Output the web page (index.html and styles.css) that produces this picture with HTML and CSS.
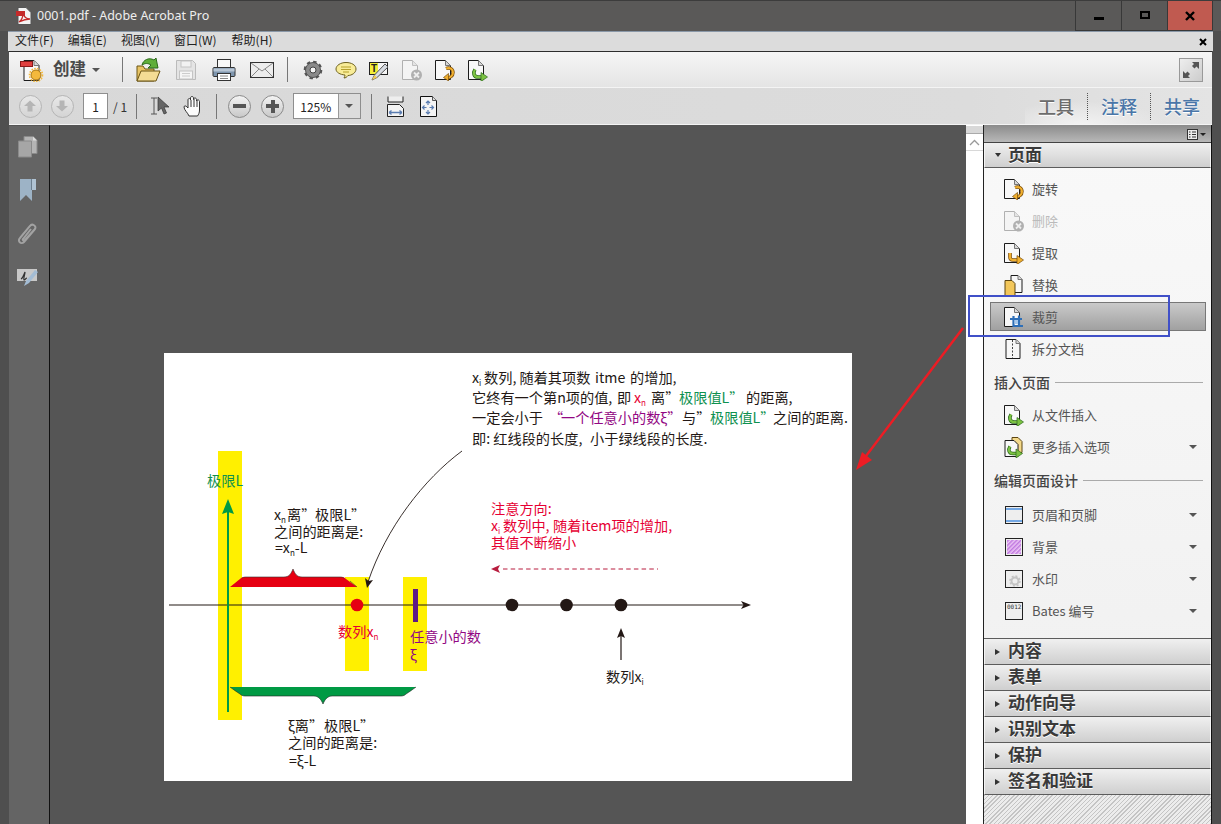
FILE: index.html
```html
<!DOCTYPE html>
<html lang="zh">
<head>
<meta charset="utf-8">
<title>0001.pdf - Adobe Acrobat Pro</title>
<link rel="stylesheet" href="styles.css">
</head>
<body>
<svg class="defs" width="0" height="0">
  <defs>
    <g id="sheet"><path d="M1.500 1.500h10l5 5v14h-15z" fill="#f8f8f8" stroke="#1c1c1c"/><path d="M11.500 1.500v5h5" fill="#d8d8d8" stroke="#777"/></g>
    <g id="sheetg"><path d="M1.500 1.500h10l5 5v14h-15z" fill="#f4f4f4" stroke="#b0b0b0"/><path d="M11.500 1.500v5h5" fill="#e4e4e4" stroke="#c0c0c0"/></g>
    <symbol id="rotate" viewBox="0 0 22 22"><use href="#sheet"/><path d="M12 9.500c4-1.500 7 .5 7 4 0 3.500-3 5.500-6 5" fill="none" stroke="#7a4d0a" stroke-width="3.400"/><path d="M12 9.500c4-1.500 7 .5 7 4 0 3.500-3 5.500-6 5" fill="none" stroke="#f0b030" stroke-width="2"/><path d="M14.500 14.500l-5 4 5 3.500z" fill="#f0b030" stroke="#7a4d0a" stroke-width=".7"/></symbol>
    <symbol id="delete" viewBox="0 0 22 22"><use href="#sheetg"/><circle cx="15.500" cy="16" r="5.500" fill="#b0b0b0"/><path d="M13 13.500l5 5m0-5l-5 5" stroke="#eee" stroke-width="1.800"/></symbol>
    <symbol id="extract" viewBox="0 0 22 22"><use href="#sheet"/><path d="M7 11v4c0 2 1 3 3 3h5" fill="none" stroke="#7a4d0a" stroke-width="3.600"/><path d="M7 11v4c0 2 1 3 3 3h5" fill="none" stroke="#f0b030" stroke-width="2.200"/><path d="M14 13.500l6.500 4.500-6.500 4.500z" fill="#f0b030" stroke="#7a4d0a" stroke-width=".7"/></symbol>
    <symbol id="replace" viewBox="0 0 22 22"><path d="M8 1.500h7l4 4v13H8z" fill="#f8f8f8" stroke="#1c1c1c"/><path d="M15 1.500v4h4" fill="#ddd" stroke="#777"/><path d="M2 6.500h7l3 3v12H2z" fill="#f3c75a" stroke="#5c4510"/></symbol>
    <symbol id="crop" viewBox="0 0 22 22"><use href="#sheet"/><path d="M7 13h12M16 9.500v9.500M10.500 10v10h9.500" fill="none" stroke="#2e6fb8" stroke-width="2.200"/><rect x="11.500" y="14" width="3.500" height="4" fill="#a6c8ec"/></symbol>
    <symbol id="split" viewBox="0 0 22 22"><path d="M3 1.500h10l4 4v15H3z" fill="#f8f8f8" stroke="#1c1c1c"/><path d="M13 1.500v4h4" fill="#d8d8d8" stroke="#777"/><path d="M9.500 2v18" stroke="#444" stroke-dasharray="2 1.500"/></symbol>
    <symbol id="fromfile" viewBox="0 0 22 22"><use href="#sheet"/><path d="M8 10.500c-2 3-1.500 7.500 3 7.500h4" fill="none" stroke="#2c6a1c" stroke-width="3.600"/><path d="M8 10.500c-2 3-1.500 7.500 3 7.500h4" fill="none" stroke="#7cc242" stroke-width="2.200"/><path d="M14 13.500l6.500 4.500-6.500 4.500z" fill="#7cc242" stroke="#2c6a1c" stroke-width=".7"/></symbol>
    <symbol id="more" viewBox="0 0 22 22"><path d="M9 1.500h6l4 4v11H9z" fill="#f4d98a" stroke="#5c4510"/><path d="M2 4.500h9l4 4v12H2z" fill="#f8f8f8" stroke="#1c1c1c"/><path d="M7 10.500c-2 3-1.500 7 3 7h4" fill="none" stroke="#2c6a1c" stroke-width="3.400"/><path d="M7 10.500c-2 3-1.500 7 3 7h4" fill="none" stroke="#7cc242" stroke-width="2"/><path d="M13 13l6.500 4.500L13 22z" fill="#7cc242" stroke="#2c6a1c" stroke-width=".7"/></symbol>
    <symbol id="header" viewBox="0 0 22 22"><rect x="2.500" y="2.500" width="17" height="17" fill="#eee" stroke="#222"/><rect x="3" y="4" width="16" height="2" fill="#74a8e4"/><rect x="3" y="16" width="16" height="2" fill="#74a8e4"/></symbol>
    <pattern id="hatch" width="3" height="3" patternUnits="userSpaceOnUse" patternTransform="rotate(-45)"><rect width="3" height="3" fill="#ecc6f4"/><rect width="3" height="1.500" fill="#c078e0"/></pattern>
    <symbol id="background" viewBox="0 0 22 22"><rect x="2.500" y="2.500" width="17" height="17" fill="#eee" stroke="#222"/><rect x="4" y="4" width="14" height="14" fill="url(#hatch)"/></symbol>
    <symbol id="watermark" viewBox="0 0 22 22"><rect x="2.500" y="2.500" width="17" height="17" fill="#eee" stroke="#222"/><circle cx="12" cy="13" r="3.500" fill="none" stroke="#c4c4c4" stroke-width="2"/><circle cx="12" cy="13" r="5" fill="none" stroke="#c4c4c4" stroke-width="1.500" stroke-dasharray="2 1.900"/></symbol>
    <symbol id="bates" viewBox="0 0 22 22"><rect x="2.500" y="2.500" width="17" height="17" fill="#eee" stroke="#222"/><text class="bates-no" x="4" y="8.500">0012</text></symbol>
    <symbol id="create" viewBox="0 0 24 24"><path d="M4 2.500h10l5 5v15H4z" fill="#f8f8f8" stroke="#1c1c1c"/><path d="M14 2.500v5h5" fill="#d8d8d8" stroke="#777"/><rect x="0.500" y="3.500" width="12" height="5" fill="#e04040" stroke="#8a1a1a"/><circle cx="16" cy="17" r="5" fill="#f4b93c" stroke="#a87410"/><circle cx="16" cy="17" r="6.500" fill="none" stroke="#f4b93c" stroke-width="1.600" stroke-dasharray="1.600 1.200"/></symbol>
    <symbol id="open" viewBox="0 0 26 26"><path d="M2 24V9h6l2 3h9v12z" fill="#e8c465" stroke="#6b5414"/><path d="M2 24l4-10h19l-4 10z" fill="#f4dc94" stroke="#6b5414"/><path d="M7 8c1-5 7-8 12-5l2-2 2 10-10 0 3-3c-3-2-6-2-9 0z" fill="#5fae3a" stroke="#2c6a1c"/></symbol>
    <symbol id="save" viewBox="0 0 24 24"><path d="M2.500 2.500h16l3 3v16h-19z" fill="#e4e4e4" stroke="#bbb"/><rect x="7" y="3" width="10" height="6" fill="#f2f2f2" stroke="#c4c4c4"/><rect x="5.500" y="13" width="13" height="8" fill="#f5f5f5" stroke="#c4c4c4"/><path d="M8 15.500h8M8 18h8" stroke="#ccc"/></symbol>
    <symbol id="print" viewBox="0 0 24 24"><rect x="5.500" y="1.500" width="13" height="9" fill="#f8f8f8" stroke="#333"/><path d="M2 9.500h20c.5 0 1 .5 1 1v7c0 .5-.5 1-1 1H2c-.5 0-1-.5-1-1v-7c0-.5.5-1 1-1z" fill="#7e95ad" stroke="#333"/><rect x="1.500" y="10.500" width="21" height="3" fill="#b7c5d4"/><rect x="5.500" y="15.500" width="13" height="7" fill="#fff" stroke="#333"/><path d="M8 18h8M8 20.500h8" stroke="#888"/></symbol>
    <symbol id="mail" viewBox="0 0 24 18"><rect x="0.500" y="1.500" width="23" height="15" fill="#ededed" stroke="#333"/><path d="M1 2l11 8 11-8M1 16l8-8M23 16l-8-8" fill="none" stroke="#888"/></symbol>
    <symbol id="gear" viewBox="0 0 22 22"><circle cx="11" cy="11" r="7.500" fill="#8a8a8a" stroke="#555" stroke-width="1"/><circle cx="11" cy="11" r="8.300" fill="none" stroke="#555" stroke-width="2" stroke-dasharray="3.500 3"/><circle cx="11" cy="11" r="3" fill="#f4f4f4" stroke="#444"/></symbol>
    <symbol id="comment" viewBox="0 0 22 22"><path d="M11 3.500c5.500 0 10 2.500 10 6.500s-4.500 6.500-8 6.500c-1 1.500-2.500 2.500-4 2.500 .5-1 1-2 1-3C5 15.500 1 13.500 1 10s4.500-6.500 10-6.500z" fill="#f8ec98" stroke="#6d6120"/><path d="M6 8h10M6 10.500h10M8 13h6" stroke="#b5a02c"/></symbol>
    <symbol id="note" viewBox="0 0 22 22"><rect x="1.500" y="3.500" width="18" height="12" fill="#f4f4f4" stroke="#222"/><rect x="2" y="4" width="8" height="11" fill="#f3ed3a"/><text class="note-t" x="3" y="13">T</text><path d="M4 21l2.500-5L17 5l3 3L9 18.500z" fill="#d8dce2" stroke="#555"/><path d="M4 21l2.500-5 2.500 2.500z" fill="#f1cb52"/></symbol>
    <symbol id="fitw" viewBox="0 0 17 21"><path d="M1 .5v5.500h15V.5" fill="#eee" stroke="#222"/><path d="M.5 8.500h12l4 4v8H.5z" fill="#f4f4f4" stroke="#222"/><path d="M2 16.500h13M2 16.500l2.500-2m-2.500 2l2.500 2M15 16.500l-2.500-2M15 16.500l-2.500 2" fill="none" stroke="#5a7cb0" stroke-width="1.300"/></symbol>
    <symbol id="fitp" viewBox="0 0 17 21"><path d="M.5 .5h12l4 4v16H.5z" fill="#f4f4f4" stroke="#111"/><path d="M12.500 .5v4h4" fill="#ddd" stroke="#555"/><path d="M8 5v4M6 7l2-2 2 2M8 18v-4M6 16l2 2 2-2M2.500 11.500h4M4.500 9.500l-2 2 2 2M13.500 11.500h-4M11.500 9.500l2 2-2 2" fill="none" stroke="#5a7cb0" stroke-width="1.200"/></symbol>
  </defs>
</svg>

<div class="window">
  <header class="titlebar">
    <svg class="app-icon" viewBox="0 0 16 18"><path d="M2 .5h8l5 5v12H2z" fill="#f4f4f4" stroke="#555"/><rect x="0" y="4" width="9" height="5" fill="#c42b2b"/><path d="M3 15c3-2 4-6 4-9 1 4 3 6 7 6-3 0-7 1-11 3z" fill="none" stroke="#c42b2b" stroke-width="1.300"/></svg>
    <span class="title">0001.pdf - Adobe Acrobat Pro</span>
    <div class="win-btns">
      <div class="win-btn"><span class="g-min"></span></div>
      <div class="win-btn"><span class="g-max"></span></div>
      <div class="win-btn win-close"><svg width="10" height="10" viewBox="0 0 10 10"><path d="M1 1l8 8M9 1l-8 8" stroke="#000" stroke-width="2.400"/></svg></div>
    </div>
  </header>

  <nav class="menubar">
    <span>文件(F)</span><span>编辑(E)</span><span>视图(V)</span><span>窗口(W)</span><span>帮助(H)</span>
    <svg class="menu-close" width="8" height="8" viewBox="0 0 8 8"><path d="M1 1l6 6M7 1L1 7" stroke="#000" stroke-width="2"/></svg>
  </nav>

  <div class="toolbar tb-main">
    <div class="create">
      <svg class="i24"><use href="#create"/></svg>
      <span class="create-label">创建</span>
      <span class="caret"></span>
    </div>
    <span class="sep sep-a"></span>
    <div class="group g38">
      <span class="btn"><svg class="i26"><use href="#open"/></svg></span>
      <span class="btn"><svg class="i24"><use href="#save"/></svg></span>
      <span class="btn"><svg class="i24"><use href="#print"/></svg></span>
      <span class="btn"><svg class="i-mail"><use href="#mail"/></svg></span>
    </div>
    <span class="sep sep-b"></span>
    <div class="group g33 g-tools">
      <span class="btn"><svg class="i22"><use href="#gear"/></svg></span>
      <span class="btn"><svg class="i22"><use href="#comment"/></svg></span>
      <span class="btn"><svg class="i22"><use href="#note"/></svg></span>
      <span class="btn"><svg class="i22"><use href="#delete"/></svg></span>
      <span class="btn"><svg class="i22"><use href="#rotate"/></svg></span>
      <span class="btn"><svg class="i22"><use href="#fromfile"/></svg></span>
    </div>
    <div class="expand">
      <svg width="20" height="20" viewBox="0 0 20 20"><path d="M11 2h7v7l-2.500-2.500-2 2-2.500-2.500 2-2zM9 18H2v-7l2.500 2.500 2-2 2.500 2.500-2 2z" fill="#555"/></svg>
    </div>
  </div>

  <div class="toolbar tb-nav">
    <div class="group g32">
      <span class="btn"><span class="round off"><svg width="12" height="12" viewBox="0 0 12 12"><path d="M6 .5L12 6H8.500v5.500h-5V6H0z" fill="#b5b5b5"/></svg></span></span>
      <span class="btn"><span class="round off"><svg width="12" height="12" viewBox="0 0 12 12"><path d="M6 11.500L12 6H8.500V.5h-5V6H0z" fill="#b5b5b5"/></svg></span></span>
    </div>
    <span class="field pageno">1</span>
    <span class="pagecount">/ 1</span>
    <span class="sep sep-c"></span>
    <div class="group g32 g-hand">
      <span class="btn"><svg width="20" height="20" viewBox="0 0 20 20"><path d="M0 2h6M0 18h6M3 2v16" stroke="#555" fill="none"/><path d="M7 1v14l3.500-3 2.500 6 2.500-1-2.500-6h5z" fill="#666" stroke="#333" stroke-width=".7"/></svg></span>
      <span class="btn"><svg width="21" height="23" viewBox="0 0 21 23"><path d="M6 21c-1-3-5-6-5-9 0-1.500 2-1.500 3 0l1 1V5c0-2 2.500-2 2.500 0V3c0-2 3-2 3 0v1.500c0-2 3-2 3 0V6c0-1.500 3-1.500 3 .5V15c0 3-1 4.500-2 6z" fill="#fbfbfb" stroke="#333"/><path d="M8 5v7M11 4v8M14 5v7" stroke="#333" fill="none"/></svg></span>
    </div>
    <span class="sep sep-d"></span>
    <div class="group g33 g-zoom">
      <span class="btn"><span class="round"><span class="bar"></span></span></span>
      <span class="btn"><span class="round"><span class="bar"></span><span class="bar bar-v"></span></span></span>
    </div>
    <div class="field zoombox"><span class="zoomval">125%</span><span class="zoomdrop"><span class="caret"></span></span></div>
    <span class="sep sep-e"></span>
    <div class="group g33 g-fit">
      <span class="btn"><svg width="17" height="21"><use href="#fitw"/></svg></span>
      <span class="btn"><svg width="17" height="21"><use href="#fitp"/></svg></span>
    </div>
    <div class="tabs">
      <span class="tab tab-tools">工具</span>
      <span class="tab tab-blue">注释</span>
      <span class="tab tab-blue">共享</span>
    </div>
  </div>

  <main class="main">
    <aside class="nav-rail">
      <svg width="20" height="22" viewBox="0 0 20 22"><path d="M6 .5h9l4 4v13H6z" fill="#b4b4b4" stroke="#8a8a8a"/><path d="M15 .5v4h4" fill="#dcdcdc"/><path d="M.5 5h13v16H.5z" fill="#a6a6a6" stroke="#8a8a8a"/></svg>
      <svg width="18" height="24" viewBox="0 0 18 24"><path d="M1 1h12v22l-6-6-6 6z" fill="#9db3c6"/><path d="M12 1h5v11h-5z" fill="#b0c3d3"/><path d="M12 1h1v11h-1z" fill="#6d7f8f"/></svg>
      <svg width="21" height="25" viewBox="0 0 21 25"><path d="M18 7L7 20c-3 3-7-1-4-4L13 4c2-3 7 0 5 3L8 18c-1 1-3 0-2-1l8-10" fill="none" stroke="#a2a2a2" stroke-width="2"/></svg>
      <svg width="24" height="20" viewBox="0 0 24 20"><rect x="1" y="2" width="20" height="12" fill="#c8c8c8"/><path d="M5 12c2-1 3-5 4-7 0 3-2 7-1 8 1 0 2-2 3-2" fill="none" stroke="#333" stroke-width="1.200"/><path d="M8 19l2-5 9-11 3 2-9 11z" fill="#a3bcd4"/></svg>
    </aside>

    <section class="doc">
      <div class="page">
        <svg class="sheet-art" viewBox="164 353 688 428" width="688" height="428">
          <rect x="218" y="451" width="24" height="269" fill="#fff000"/>
          <rect x="345" y="577" width="24" height="94" fill="#fff000"/>
          <rect x="403" y="577" width="24" height="94" fill="#fff000"/>

          <path d="M169 605H745" stroke="#231815" stroke-width="1.200"/>
          <path d="M751 605l-10-4 2.500 4-2.500 4z" fill="#231815"/>

          <path d="M228 712V510" stroke="#009a44" stroke-width="2"/>
          <path d="M228 499l6 15-6-2-6 2z" fill="#009a44"/>

          <path d="M230 587c4-3 7-6 10-8 2-2 3-2 6-2h38c5 0 7-3 9-8 2 5 4 8 9 8h38c3 0 4 0 6 2 3 2 7 5 11 8z" fill="#e60012"/>
          <path d="M242 578c2-1 3-1 4-1h38c5 0 7-3 9-8 2 5 4 8 9 8h38c1 0 2 0 4 1 M350 581l7 6" fill="none" stroke="#333" stroke-width=".6"/>
          <path d="M230 687H416c-4 3-7 5-10 7-2 2-4 2-6 2h-68c-4 0-7 3-9 8-2-5-5-8-9-8h-68c-2 0-4 0-6-2-3-2-6-4-10-7z" fill="#009a44"/>
          <path d="M230 687c4 3 7 5 10 7 2 2 4 2 6 2h68c4 0 7 3 9 8 2-5 5-8 9-8h68c2 0 4 0 6-2 3-2 6-4 10-7" fill="none" stroke="#222" stroke-width=".6"/>

          <circle cx="357" cy="605" r="6.300" fill="#e60012"/>
          <rect x="413" y="589" width="5" height="33" fill="#5f1985"/>
          <circle cx="512" cy="605" r="6.300" fill="#231815"/>
          <circle cx="566.500" cy="605" r="6.300" fill="#231815"/>
          <circle cx="621" cy="605" r="6.300" fill="#231815"/>

          <path d="M621 660V634" stroke="#231815" stroke-width="1.200"/>
          <path d="M621 628l4 10-4-2-4 2z" fill="#231815"/>

          <path d="M462 451C424 479 386 528 368 582" fill="none" stroke="#231815" stroke-width=".9"/>
          <path d="M367 588l-2-10 3.500 3 4.500-1z" fill="#231815"/>

          <path d="M503 569H658" stroke="#b81c3e" stroke-dasharray="4.500 3.200"/>
          <path d="M491 569l9-4-2 4 2 4z" fill="#b81c3e"/>

          <text class="tx" x="472" y="383">x<tspan class="sub" dy="3">i</tspan><tspan x="484" dy="-3">数列, 随着其项数</tspan><tspan x="595">itme</tspan><tspan x="630">的增加,</tspan></text>
          <text class="tx" x="472" y="403">它终有一个第n项的值,<tspan x="617">即</tspan><tspan class="red" x="634">x</tspan><tspan class="sub red" dy="3">n</tspan><tspan x="651" dy="-3">离”</tspan><tspan class="green" x="679">极限值L”</tspan><tspan x="746">的距离,</tspan></text>
          <text class="tx" x="472" y="423">一定会小于<tspan class="purple" x="549">“</tspan><tspan class="purple" x="561">一个任意小的数ξ”</tspan><tspan x="682">与”</tspan><tspan class="green" x="710">极限值L”</tspan><tspan x="773">之间的距离.</tspan></text>
          <text class="tx" x="472" y="444">即: 红线段的长度,<tspan x="590">小于绿线段的长度.</tspan></text>

          <text class="tx red" x="491" y="514">注意方向:</text>
          <text class="tx red" x="491" y="531">x<tspan class="sub" dy="3">i</tspan><tspan x="503" dy="-3">数列中,</tspan><tspan x="553">随着item项的增加,</tspan></text>
          <text class="tx red" x="491" y="548">其值不断缩小</text>

          <text class="tx green" x="207" y="486">极限L</text>

          <text class="tx" x="274" y="520">x<tspan class="sub" dy="3">n</tspan><tspan x="287" dy="-3">离”</tspan><tspan x="315">极限L”</tspan></text>
          <text class="tx" x="274" y="537">之间的距离是:</text>
          <text class="tx" x="275" y="553">=x<tspan class="sub" dy="3">n</tspan><tspan dy="-3">-L</tspan></text>

          <text class="tx red" x="338" y="637">数列x<tspan class="sub" dy="3">n</tspan></text>
          <text class="tx purple" x="410" y="642">任意小的数</text>
          <text class="tx purple" x="410" y="660">ξ</text>

          <text class="tx" x="288" y="731">ξ离”<tspan x="324">极限L”</tspan></text>
          <text class="tx" x="288" y="748">之间的距离是:</text>
          <text class="tx" x="289" y="766">=ξ-L</text>

          <text class="tx" x="606" y="682">数列x<tspan class="sub" dy="3">i</tspan></text>
        </svg>
      </div>
    </section>

    <div class="vscroll">
      <span class="vs-cap"></span>
      <span class="vs-up"><svg width="11" height="7" viewBox="0 0 11 7"><path d="M1 6l4.500-4.500L10 6" fill="none" stroke="#999" stroke-width="1.300"/></svg></span>
    </div>

    <aside class="panel">
      <div class="panel-top">
        <svg width="11" height="11" viewBox="0 0 11 11"><rect x=".5" y=".5" width="10" height="10" fill="#eee" stroke="#333"/><path d="M2 3h1.500M5 3h4M2 5.500h1.500M5 5.500h4M2 8h1.500M5 8h4" stroke="#333"/></svg>
        <span class="caret caret-sm"></span>
      </div>
      <div class="acc acc-open"><span class="tri-down"></span><span class="acc-t">页面</span></div>
      <div class="acc-body">
        <div class="item"><svg class="i22"><use href="#rotate"/></svg><span>旋转</span></div>
        <div class="item item-off"><svg class="i22"><use href="#delete"/></svg><span>删除</span></div>
        <div class="item"><svg class="i22"><use href="#extract"/></svg><span>提取</span></div>
        <div class="item"><svg class="i22"><use href="#replace"/></svg><span>替换</span></div>
        <div class="item item-on"><svg class="i22"><use href="#crop"/></svg><span>裁剪</span></div>
        <div class="item"><svg class="i22"><use href="#split"/></svg><span>拆分文档</span></div>
        <div class="subhead"><span>插入页面</span></div>
        <div class="item"><svg class="i22"><use href="#fromfile"/></svg><span>从文件插入</span></div>
        <div class="item"><svg class="i22"><use href="#more"/></svg><span>更多插入选项</span><i class="caret"></i></div>
        <div class="subhead subhead-last"><span>编辑页面设计</span></div>
        <div class="item"><svg class="i22"><use href="#header"/></svg><span>页眉和页脚</span><i class="caret"></i></div>
        <div class="item"><svg class="i22"><use href="#background"/></svg><span>背景</span><i class="caret"></i></div>
        <div class="item"><svg class="i22"><use href="#watermark"/></svg><span>水印</span><i class="caret"></i></div>
        <div class="item"><svg class="i22"><use href="#bates"/></svg><span>Bates 编号</span><i class="caret"></i></div>
      </div>
      <div class="acc"><span class="tri-right"></span><span class="acc-t">内容</span></div>
      <div class="acc"><span class="tri-right"></span><span class="acc-t">表单</span></div>
      <div class="acc"><span class="tri-right"></span><span class="acc-t">动作向导</span></div>
      <div class="acc"><span class="tri-right"></span><span class="acc-t">识别文本</span></div>
      <div class="acc"><span class="tri-right"></span><span class="acc-t">保护</span></div>
      <div class="acc"><span class="tri-right"></span><span class="acc-t">签名和验证</span></div>
      <div class="hatch"></div>
    </aside>

    <div class="callout-box"></div>
    <svg class="callout-arrow" width="125" height="160" viewBox="0 0 125 160"><path d="M109 7L12 135" stroke="#ed1c24" stroke-width="2.400"/><path d="M2 149l16-10-10-8z" fill="#ed1c24"/></svg>
  </main>
</div>
</body>
</html>
```
FILE: styles.css
```css
* { box-sizing: border-box; }
html, body { margin: 0; padding: 0; }
body {
  width: 1221px;
  height: 824px;
  overflow: hidden;
  background: #4f4f4f;
  font-family: "Noto Sans CJK SC", "Noto Sans", sans-serif;
  color: #333;
}
.defs { position: absolute; }
.window {
  width: 1221px;
  height: 824px;
  display: flex;
  flex-direction: column;
  padding: 0 8px;
  background: #4f4f4f;
  border-top: 1px solid #3c3c3c;
}

/* title bar */
.titlebar {
  height: 30px;
  flex: none;
  display: flex;
  align-items: center;
  margin: 0 -8px;
  padding-left: 16px;
  background: #5a5958;
  color: #eee;
}
.app-icon { width: 16px; height: 18px; margin-right: 5px; margin-top: -1px; }
.title { font-family: "Noto Sans", sans-serif; font-size: 12.500px; margin-top: -2px; }
.win-btns { margin-left: auto; margin-right: 8px; display: flex; height: 30px; }
.win-btn {
  width: 46px;
  display: flex;
  align-items: center;
  justify-content: center;
  border-left: 1px solid #383838;
  border-bottom: 1px solid #383838;
  background: #5a5958;
}
.win-close { background: #c05a50; width: 46px; border-right: 1px solid #383838; }
.g-min { width: 10px; height: 3px; background: #000; margin-top: 5px; }
.g-max { width: 10px; height: 8px; border: 2px solid #000; border-top-width: 2px; margin-top: -1px; }

/* menu */
.menubar {
  height: 20px;
  flex: none;
  display: flex;
  align-items: center;
  gap: 14px;
  padding-left: 7px;
  padding-right: 6px;
  padding-bottom: 4px;
  background: #dcdcdc;
  border-top: 1px solid #8a98a8;
  font-size: 12px;
  line-height: 1;
  color: #222;
}
.menubar span:nth-child(n+4) { margin-right: 1px; }
.menu-close { margin-left: auto; margin-top: 4px; }

/* toolbars */
.toolbar {
  flex: none;
  display: flex;
  align-items: center;
  margin-left: 1px;
  margin-right: 1px;
}
.tb-main { background: linear-gradient(#f6f6f6, #e4e4e4); padding-left: 11px; border-top: 1px solid #2e2e2e; border-bottom: 1px solid #f4f4f4; height: 37px; }
.tb-nav { background: linear-gradient(90deg, #d8d8d8, #dcdcdc 80%, #e4e4e4); padding-left: 5px; border-bottom: 1px solid #f4f4f4; height: 37px; }
.group { display: flex; align-items: center; height: 100%; }
.btn { display: flex; align-items: center; justify-content: center; height: 100%; }
.g38 .btn { width: 38px; }
.g33 .btn { width: 33px; }
.g32 .btn { width: 32px; }
.i22 { width: 22px; height: 22px; flex: none; }
.i24 { width: 24px; height: 24px; flex: none; }
.i26 { width: 26px; height: 26px; flex: none; }
.i-mail { width: 24px; height: 18px; }

.create { display: flex; align-items: center; }
.create-label { font-size: 16.500px; font-weight: 700; line-height: 1; color: #4a4a4a; margin-left: 9px; margin-right: 6px; padding-bottom: 2px; }
.caret { display: inline-block; width: 0; height: 0; border-style: solid; border-width: 4px 4.500px 0; border-color: #555 transparent transparent; }
.sep { width: 1px; height: 25px; background: #777; flex: none; }
.sep-a { margin: 0 6px 0 22px; }
.sep-b { margin: 0 8px 0 6px; }
.sep-c { margin: 0 8px 0 9px; }
.sep-d { margin: 0 6px 0 7px; }
.sep-e { margin: 0 7px 0 10px; }

.expand {
  margin-left: auto;
  margin-right: 9px;
  width: 24px;
  height: 24px;
  display: flex;
  align-items: center;
  justify-content: center;
  border: 1px solid #999;
  background: linear-gradient(135deg, #eee, #ccc);
}
.field { background: #fff; border: 1px solid #fff; outline: 1px solid #8e8e8e; outline-offset: -1px; height: 26px; }
.pageno { width: 25px; margin-left: 5px; display: flex; align-items: center; justify-content: center; font-size: 12px; color: #222; }
.pagecount { margin-left: 5px; font-size: 12px; color: #333; width: 14px; white-space: nowrap; }
.round {
  width: 23px;
  height: 23px;
  border-radius: 50%;
  border: 1px solid #8a8a8a;
  background: linear-gradient(#f4f4f4, #c8c8c8);
  display: flex;
  align-items: center;
  justify-content: center;
  position: relative;
}
.round.off { border-color: #b5b5b5; background: linear-gradient(#e8e8e8, #d4d4d4); }
.bar { position: absolute; width: 13px; height: 4px; background: #555; left: 4px; top: 8.500px; }
.bar-v { width: 4px; height: 13px; left: 8.500px; top: 4px; }
.zoombox { margin-left: 4px; width: 68px; display: flex; align-items: center; }
.zoomval { width: 45px; text-align: center; font-size: 12px; color: #222; }
.zoomdrop {
  width: 23px;
  height: 24px;
  background: #dcdcdc;
  border-left: 1px solid #999;
  display: flex;
  align-items: center;
  justify-content: center;
}
.tabs { margin-left: auto; display: flex; align-items: center; padding-right: 12px; height: 100%; background: radial-gradient(ellipse at 30% 100%, #f2f2f2, transparent 45%); }
.tab { font-size: 18px; line-height: 27px; padding: 0 13px; font-weight: 500; text-shadow: 0 1px 0 #fff; }
.tab + .tab { border-left: 1px dotted #555; }
.tab-tools { color: #6c6c6c; }
.tab-blue { color: #4a76a8; }
.tab:last-child { padding-right: 0; }

/* main */
.main { flex: 1; display: flex; min-height: 0; position: relative; margin-left: 1px; margin-right: 1px; background: #555; }
.nav-rail {
  width: 41px;
  flex: none;
  background: #646464;
  border-right: 1px solid #111;
  display: flex;
  flex-direction: column;
  align-items: center;
  padding: 10px 3px 0 0;
  gap: 20px;
  border-top: 1px solid #555;
}
.doc { flex: 1; background: #555; padding: 228px 0 0 114px; min-width: 0; }
.page { width: 688px; height: 428px; background: #fff; }
.sheet-art { display: block; }
.tx { font-family: "Noto Sans CJK SC", sans-serif; font-size: 14.200px; fill: #231815; font-weight: 400; white-space: pre; }
.sub { font-size: 8px; }
.red { fill: #e60033; }
.green { fill: #0f9150; }
.purple { fill: #920783; }
.bates-no { font-family: "DejaVu Sans Mono", monospace; font-size: 6px; fill: #333; }
.note-t { font-family: "Liberation Sans", sans-serif; font-size: 10px; font-weight: 700; fill: #222; }

.vscroll { width: 18px; flex: none; background: #fff; border-right: 1px solid #222; display: flex; flex-direction: column; }
.vs-cap { height: 8px; background: #d8d8d8; border-bottom: 1px solid #aaa; margin-top: 1px; }
.vs-up { height: 17px; display: flex; align-items: center; justify-content: center; border-bottom: 1px solid #d8d8d8; }

.panel { width: 228px; flex: none; display: flex; flex-direction: column; background: linear-gradient(#f9f9f9, #efefef); border-right: 1px solid #111; }
.panel-top {
  height: 18px;
  flex: none;
  display: flex;
  align-items: center;
  justify-content: flex-end;
  gap: 2px;
  padding-right: 5px;
  padding-top: 2px;
  background: linear-gradient(#8b8b8b, #b8b8b8);
  border-bottom: 1px solid #444;
}
.caret-sm { border-width: 3px 3.500px 0; border-color: #222 transparent transparent; }
.acc {
  height: 26px;
  flex: none;
  display: flex;
  align-items: center;
  padding-left: 8px;
  font-size: 17px;
  font-weight: 700;
  line-height: 1;
  color: #3a3a3a;
  text-shadow: 0 1px 0 #fff;
  background: linear-gradient(#f0f0f0, #cfcfcf);
  border-bottom: 1px solid #5c5c5c;
  border-left: 1px solid #f4f4f4;
  border-right: 1px solid #f4f4f4;
}
.acc-t { margin-top: -4px; }
.acc-open { height: 25px; }
.acc-open .acc-t { margin-top: -3px; }
.tri-down { width: 0; height: 0; border-style: solid; border-width: 4px 3.500px 0; border-color: #333 transparent transparent; margin: 0 7px 0 2px; }
.tri-right { width: 0; height: 0; border-style: solid; border-width: 3.500px 0 3.500px 5px; border-color: transparent transparent transparent #333; margin: 0 8px 0 2px; }
.acc-body { height: 471px; flex: none; padding: 6px 5px 0 6px; border-bottom: 1px solid #5c5c5c; }
.item {
  height: 29px;
  margin-bottom: 3px;
  display: flex;
  align-items: center;
  padding-left: 12px;
  padding-right: 8px;
  font-size: 13px;
  line-height: 1;
  color: #555;
  border: 1px solid transparent;
}
.item > span { margin-left: 6px; }
.item > svg { margin-right: 1px; }
.item .caret { margin-left: auto; }
.item-off { color: #bbb; }
.item-on { background: linear-gradient(#cacaca, #a0a0a0); border-color: #777; }
.subhead {
  height: 18px;
  margin: 10px 3px 9px 4px;
  display: flex;
  align-items: center;
  gap: 5px;
  font-size: 14px;
  line-height: 1;
  font-weight: 500;
  color: #444;
}
.subhead-last { margin-bottom: 11px; }
.subhead::after { content: ""; flex: 1; height: 1px; background: #aaa; }
.hatch { flex: 1; background: repeating-linear-gradient(135deg, #c4c4c4 0 1px, #ececec 1px 3px); }

.callout-box { position: absolute; left: 959px; top: 170px; width: 202px; height: 42px; border: 2px solid #4050c8; }
.callout-arrow { position: absolute; left: 845px; top: 196px; }
```
